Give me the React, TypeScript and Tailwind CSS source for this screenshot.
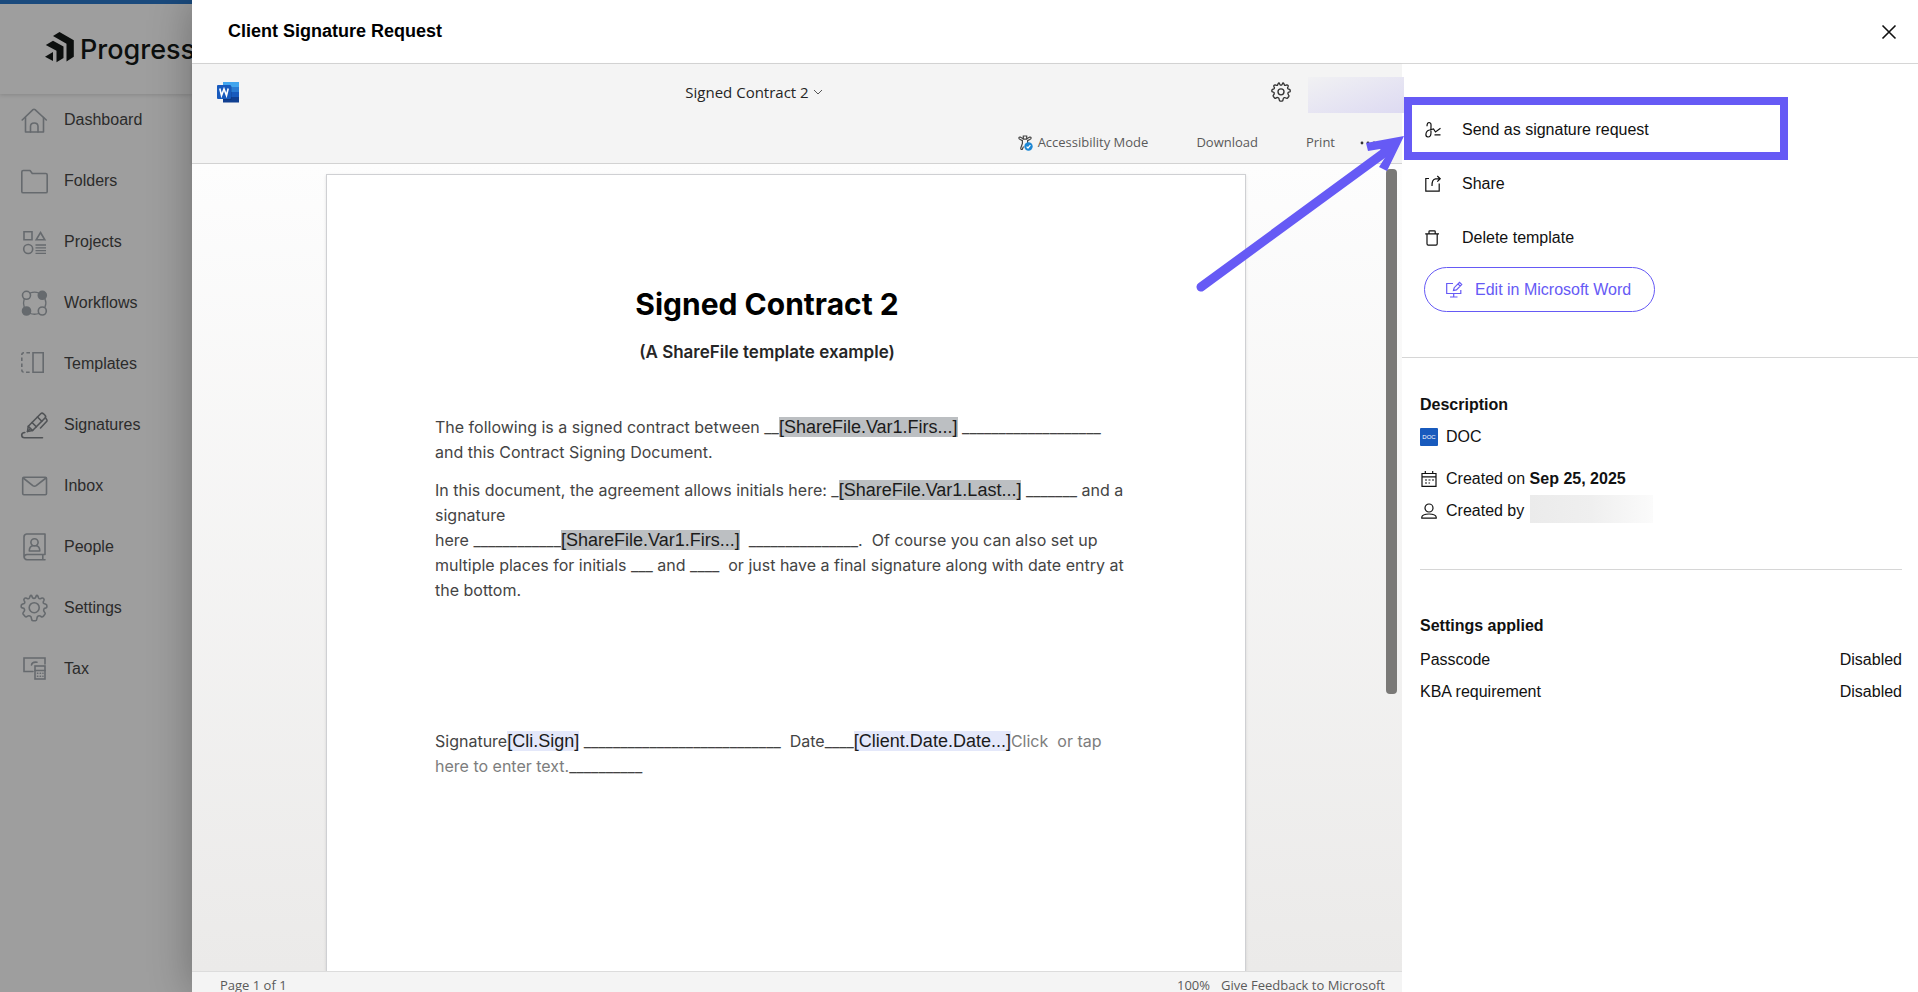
import type { ReactNode } from 'react'

type IconProps = { children: ReactNode }

function NavIcon({ children }: IconProps) {
  return (
    <svg
      viewBox="0 0 28 28"
      className="w-7 h-7 shrink-0 text-[#666a6e]"
      fill="none"
      stroke="currentColor"
      strokeWidth="1.6"
      strokeLinejoin="round"
      strokeLinecap="round"
    >
      {children}
    </svg>
  )
}

function ActionIcon({ children }: IconProps) {
  return (
    <svg viewBox="0 0 18 18" className="w-[18px] h-[18px] shrink-0" fill="none" stroke="currentColor" strokeWidth="1.2">
      {children}
    </svg>
  )
}

const GEAR =
  'M11.6 1.5 Q10.6 1.2 10.1 2.2 L9.3 4.1 Q8.8 5 7.8 4.7 L5.9 4 Q5 3.8 4.4 4.6 Q3.6 5.2 4 6.2 L4.8 8 Q5 9 4.1 9.5 L2.2 10.2 Q1.1 10.8 1.2 11.8 L1.2 13 Q1.4 13.8 2.3 13.9 Q4.5 14.3 4.5 15.5 Q5 16.8 3.3 18.5 Q2.6 19.3 3.2 20.2 L5 22.3 Q6 23.2 7 22.5 Q8.6 21.2 10 22 Q11.5 22.6 11.5 24.8 Q11.7 26.6 13 26.7 L15.5 26.7 Q16.7 26.6 16.8 25 Q17 22.7 18.2 22 Q19.5 21.4 21 22.5 Q22.2 23.4 23.2 22.4 L24.9 20.3 Q25.6 19.3 24.7 18.4 Q23.2 16.8 23.7 15.5 Q24 14.2 26 13.9 Q26.9 13.7 26.9 12.8 L26.8 11.5 Q26.8 10.6 25.8 10.2 L23.9 9.5 Q23 9 23.2 8 L24 6.2 Q24.4 5.2 23.6 4.6 Q23 3.8 22.1 4 L20.2 4.7 Q19.2 5 18.7 4.1 L17.9 2.2 Q17.4 1.2 16.4 1.5 Q15.6 4.5 14 4.5 Q12.4 4.5 11.6 1.5 Z'

const NAV = [
  {
    label: 'Dashboard',
    icon: (
      <>
        <path d="M2.2 14 L13 3.6 Q14 2.8 15 3.6 L26.3 14" />
        <path d="M5.5 11.5 V26 H23.5 V11.5" />
        <path d="M10.5 26 V20.5 Q10.5 17 14.2 17 Q18 17 18 20.5 V26" />
      </>
    )
  },
  {
    label: 'Folders',
    icon: <path d="M1.8 5 Q1.8 3.5 3.3 3.5 H10 L12.3 6.5 H25.7 Q27.2 6.5 27.2 8 V24.4 Q27.2 25.8 25.7 25.8 H3.3 Q1.8 25.8 1.8 24.4 Z" />
  },
  {
    label: 'Projects',
    icon: (
      <>
        <path d="M4 3.8 H12 V11.8 H4 Z" strokeLinejoin="miter" />
        <path d="M20.5 4.5 L24.8 11.8 H16.2 Z" strokeLinejoin="miter" />
        <circle cx="8.2" cy="21" r="4.5" />
        <path d="M15.5 17 H26 M15.5 19.8 H26 M15.5 22.6 H26 M15.5 25.4 H26" strokeLinecap="butt" strokeWidth="1.3" />
      </>
    )
  },
  {
    label: 'Workflows',
    icon: (
      <>
        <circle cx="6.5" cy="6.3" r="4" />
        <circle cx="22.3" cy="6.3" r="4" fill="currentColor" />
        <circle cx="6.5" cy="22" r="4" fill="currentColor" />
        <circle cx="22.3" cy="22" r="4" />
        <path d="M10 4 Q14.5 2.2 19 4 M4.2 10 Q2.8 14 4.2 18 M25 10 Q26.8 14 25 18 M10 24.5 Q14.5 26 19 24.5" strokeWidth="1.3" />
      </>
    )
  },
  {
    label: 'Templates',
    icon: (
      <>
        <path d="M10 2.8 H4 Q1.8 2.8 1.8 5 V20 Q1.8 22.2 4 22.2 H10" strokeDasharray="3.6 2.4" strokeLinecap="butt" />
        <path d="M13 2.8 H23.2 V22.2 H13 Z" strokeLinejoin="miter" />
      </>
    )
  },
  {
    label: 'Signatures',
    icon: (
      <g className="text-[#505356]">
        <path d="M7.5 20.5 L8.3 15.2 L20.7 2.8 Q22 1.5 23.5 2.8 L25 4.3 Q26.3 5.8 25 7 L12.6 19.5 Z" stroke="currentColor" />
        <path d="M8.3 15.2 L12.6 19.5 M12 11.5 L16.3 15.8 M17.5 6 L21.8 10.3 M20.5 17 L26.8 10.3 Q27.5 9.3 26 7.5 M7.5 20.5 L10 18" stroke="currentColor" />
        <path d="M22.5 26.7 H4.5 Q1.7 26.7 1.7 24 Q1.7 21.6 4.8 21.5" stroke="currentColor" />
      </g>
    )
  },
  {
    label: 'Inbox',
    icon: (
      <>
        <rect x="2.7" y="5.3" width="23.8" height="17.5" rx="1.2" />
        <path d="M3.2 6 L12.8 13.6 Q14.5 14.8 16.2 13.6 L26 6" />
      </>
    )
  },
  {
    label: 'People',
    icon: (
      <>
        <path d="M25 1 H6.5 Q4 1.3 4 4 V23.5 Q4.2 26.5 7 26.8 H25 M25 1 V21.5 H7 Q4.3 21.7 4.2 24 M22.8 21.5 V26.8" />
        <circle cx="14.5" cy="9.3" r="3.6" />
        <path d="M9.3 18 Q9.3 13.7 12.5 12.8 M16.5 12.8 Q19.8 13.7 19.8 18 H9.3" />
      </>
    )
  },
  {
    label: 'Settings',
    icon: (
      <>
        <path d={GEAR} />
        <circle cx="14.2" cy="13.7" r="5" />
      </>
    )
  },
  {
    label: 'Tax',
    icon: (
      <>
        <path d="M13 16.5 H4 V3 H25 V9" strokeLinejoin="miter" />
        <path d="M11.5 10 Q12 6.5 17 7.2" />
        <rect x="15" y="11" width="10" height="13" strokeLinejoin="miter" />
        <path d="M15 15.5 H25" />
        <path d="M17.5 18.3 H23 M17.5 21.3 H23" strokeDasharray="0.3 2.4" />
      </>
    )
  }
]

const ACTIONS = [
  {
    label: 'Send as signature request',
    icon: (
      <path d="M3 5.2 Q3 1.5 5.2 1.5 Q7.4 1.7 7 5.5 Q6.8 8.5 7 11.5 Q7 16 4 16 Q1.8 15.8 1.9 13.2 Q2.3 9.6 5.5 9 L9.5 8 L11.5 11 L16.5 7.3 M10.5 13.8 H16.5" />
    )
  },
  {
    label: 'Share',
    icon: <path d="M5 3.5 H1.8 V16.2 H15.2 V8.5 M8 11 Q7.8 4.2 11.5 3.8 H16 M13.3 1 L16.2 3.8 L13.3 6.6" />
  },
  {
    label: 'Delete template',
    icon: <path d="M1.2 4.8 H15 M5 4.5 V2.4 Q5 1.8 5.8 1.8 H10.4 Q11.2 1.8 11.2 2.4 V4.5 M3 5 V14.8 Q3 16.2 4.2 16.2 H12 Q13.2 16.2 13.2 14.8 V5" />
  }
]

const SETTINGS = [
  { name: 'Passcode', value: 'Disabled' },
  { name: 'KBA requirement', value: 'Disabled' }
]

function Sidebar() {
  return (
    <aside className="w-48 shrink-0 overflow-hidden bg-[#9e9e9e] border-t-4 border-[#1a4a7d]">
      <div className="h-[90px] pl-[45px] pt-[2px] flex items-center gap-1.5 shadow-[0_1px_4px_rgba(0,0,0,0.15)]">
        <svg viewBox="0 0 29 31" className="w-[29px] h-[31px] shrink-0 mb-[6px]" fill="#0c0f0e">
          <path d="M8 4 L14.5 0 L28.8 8.3 V24.8 L21.5 29.5 V11.8 Z" />
          <path d="M0.8 13 L8 8.8 L18.5 14.5 V26 L11.5 30.3 V18.7 Z" />
          <path d="M0 24.8 L8 20 V29 Z" />
        </svg>
        <span className="font-[Inter] font-medium text-[27px] leading-8 text-[#0c0f0e]">Progress</span>
      </div>
      <nav>
        <ul className="-mt-[5px]">
          {NAV.map((item) => (
            <li key={item.label}>
              <a href="#" className="flex items-center gap-4 h-[61px] pl-5 text-base text-[#2b2b2b]">
                <NavIcon>{item.icon}</NavIcon>
                {item.label}
              </a>
            </li>
          ))}
        </ul>
      </nav>
    </aside>
  )
}

function WordToolbar() {
  return (
    <div className="relative h-[100px] shrink-0 bg-[#f4f4f4] border-b border-[#d2d2d2] shadow-sm font-['Open_Sans',sans-serif] text-[#5a5a5a]">
      <div className="grid grid-cols-[1fr_auto_1fr] items-center h-14 pl-[25px] pr-[111px]">
        <svg viewBox="0 0 22 21" className="w-[22px] h-[21px]">
          <path d="M6 0 H22 V5 H6 Z" fill="#41a5ee" />
          <path d="M6 5 H22 V10 H6 Z" fill="#2b7cd3" />
          <path d="M6 10 H22 V15 H6 Z" fill="#185abd" />
          <path d="M6 15 H22 V20.5 H6 Z" fill="#103f91" />
          <path d="M6 4 H14.5 V18 H6 Z" fill="#0b2d66" fillOpacity=".4" />
          <rect x="0" y="3" width="14" height="14" rx="1" fill="#185abd" />
          <path d="M2.8 6.5 L4.5 13.5 L7 7 L9.5 13.5 L11.2 6.5" fill="none" stroke="#fff" strokeWidth="1.6" />
        </svg>
        <button className="flex items-center gap-1 text-[15px] text-[#252525]">
          Signed Contract 2
          <svg viewBox="0 0 10 10" className="w-[10px] h-[10px]" fill="none" stroke="#555" strokeWidth="1">
            <path d="M1 3 L5 7 L9 3" />
          </svg>
        </button>
        <button aria-label="Settings" className="justify-self-end">
          <svg viewBox="0 0 28 28" className="w-5 h-5" fill="none" stroke="#333" strokeWidth="1.9">
            <path d={GEAR} />
            <circle cx="14" cy="13.8" r="4.2" />
          </svg>
        </button>
      </div>
      <div className="flex justify-end items-center h-[45px] pr-[25px] text-[13px]">
        <button className="flex items-center gap-[5px] mr-12">
          <svg viewBox="0 0 15 16" className="w-[15px] h-4" fill="none" stroke="#444" strokeWidth="1.2">
            <path d="M5.3 1 H8.7 V4.2 H5.3 Z" />
            <path d="M5.3 3.8 L2.6 2.2 Q0.8 1.8 0.9 3.2 Q1 4 2.2 4.5 L4.4 5.6 V8.5 L2.8 13 Q2.6 14.8 4.2 14.4 L5.5 11.5 M8.7 3.8 L11.4 2.2 Q13.2 1.8 13.1 3.2 Q13 4 11.8 4.5 L9.6 5.6 V8" />
            <circle cx="10.5" cy="11.5" r="4.2" fill="#1d87d4" stroke="none" />
            <path d="M8.6 11.6 L10 13 L12.4 10.2" stroke="#fff" />
          </svg>
          Accessibility Mode
        </button>
        <button className="mr-12">Download</button>
        <button className="mr-6">Print</button>
        <button aria-label="More options">
          <svg viewBox="0 0 18 4" className="w-[18px] h-1" fill="#333">
            <circle cx="3" cy="2" r="1.4" />
            <circle cx="9" cy="2" r="1.4" />
            <circle cx="15" cy="2" r="1.4" />
          </svg>
        </button>
      </div>
      {/* redacted account name */}
      <div className="absolute z-10 right-[-2px] top-[13px] w-24 h-9 bg-linear-to-br from-[#f1f1f3] to-[#dddaf2]" />
    </div>
  )
}

function Field({ children, tone = 'gray' }: { children: ReactNode; tone?: 'gray' | 'blue' }) {
  return (
    <span
      className={`font-['Liberation_Sans',sans-serif] text-[18px] text-[#1b1b1b] ${tone === 'gray' ? 'bg-[#bcbfc2]' : 'bg-[#e4e8fa]'}`}
    >
      {children}
    </span>
  )
}

function Line({ children }: { children: ReactNode }) {
  return <span className="block h-[25px] leading-[25px] whitespace-pre">{children}</span>
}

function DocumentPage() {
  return (
    <article className="w-[920px] border border-b-0 border-[#cfd0d3] bg-white pt-[104px] pl-[108px] font-[Inter] text-base text-[#444] shadow-sm overflow-hidden">
      <header className="w-[664px] text-center">
        <h1 className="text-[30px] leading-[50px] font-bold text-black">Signed Contract 2</h1>
        <h2 className="text-[17px] leading-[46px] font-semibold text-[#262626]">(A ShareFile template example)</h2>
      </header>
      <p className="mt-10">
        <Line>The following is a signed contract between __<Field>[ShareFile.Var1.Firs...]</Field> ___________________</Line>
        <Line>and this Contract Signing Document.</Line>
      </p>
      <p className="mt-[13px]">
        <Line>In this document, the agreement allows initials here: _<Field>[ShareFile.Var1.Last...]</Field> _______ and a</Line>
        <Line>signature</Line>
        <Line>here ____________<Field>[ShareFile.Var1.Firs...]</Field>  _______________.  Of course you can also set up</Line>
        <Line>multiple places for initials ___ and ____  or just have a final signature along with date entry at</Line>
        <Line>the bottom.</Line>
      </p>
      <p className="mt-[126px]">
        <Line>
          Signature<Field tone="blue">[Cli.Sign]</Field> ___________________________  Date____<Field tone="blue">[Client.Date.Date...]</Field>
          <span className="text-[#7d7d7d]">Click  or tap</span>
        </Line>
        <Line>
          <span className="text-[#7d7d7d]">here to enter text.</span>__________
        </Line>
      </p>
    </article>
  )
}

function Preview() {
  return (
    <section className="flex-1 min-w-0 flex flex-col">
      <WordToolbar />
      <div className="relative flex-1 min-h-0 flex justify-center pt-[10px] pr-[22px] overflow-hidden bg-linear-to-b from-[#fdfdfd] to-[#ebeae9]">
        <DocumentPage />
        <div className="absolute right-[5px] top-[5px] w-[11px] h-[525px] rounded-[4px] bg-[#7a7977]" />
      </div>
      <footer className="h-[21px] shrink-0 flex justify-between pl-7 pr-[17px] pt-1 overflow-hidden whitespace-nowrap bg-[#f4f4f4] border-t border-[#dcdcdc] font-['Open_Sans',sans-serif] text-[13px] leading-[18px] text-[#5a5a5a]">
        <span>Page 1 of 1</span>
        <span className="flex gap-[11px]">
          <span>100%</span>
          <a href="#">Give Feedback to Microsoft</a>
        </span>
      </footer>
    </section>
  )
}

function Callout() {
  return (
    <div className="pointer-events-none">
      <div className="absolute left-[2px] top-[33px] w-[384px] h-[63px] border-8 border-[#665af5]" />
      <svg viewBox="0 0 214 170" className="absolute left-[-212px] top-[66px] w-[214px] h-[170px]">
        <path d="M11 157 L198 20" stroke="#665af5" strokeWidth="9" strokeLinecap="round" />
        <path d="M214 6 L176 13 L178 21 L190 19 L196 26 L189 37 L197 41 Z" fill="#665af5" />
      </svg>
    </div>
  )
}

function DetailsPanel() {
  return (
    <section className="relative w-[516px] shrink-0 bg-white text-base text-[#111]">
      <Callout />
      <div className="h-[294px] pt-[39px] pl-[22px] border-b border-[#d6d6d6]">
        {ACTIONS.map((action) => (
          <button key={action.label} className="flex items-center gap-5 h-[54px]">
            <ActionIcon>{action.icon}</ActionIcon>
            {action.label}
          </button>
        ))}
        <button className="flex items-center gap-3 h-[45px] mt-[2px] px-5 w-[231px] rounded-full border border-[#665af5] text-[#665af5] whitespace-nowrap">
          <ActionIcon>
            <path d="M8 2.5 H1.7 V12.5 H15.8 V9 M8.7 12.5 V16 M5 16 H12.5" />
            <path d="M8.5 9.5 L9.2 6.7 L14.5 1.4 L16.7 3.6 L11.4 8.9 Z M13 2.9 L15.2 5.1" />
          </ActionIcon>
          Edit in Microsoft Word
        </button>
      </div>
      <div className="ml-[18px] mr-4">
        <div className="h-[212px] pt-[31px] border-b border-[#d6d6d6]">
          <h3 className="font-bold leading-8">Description</h3>
          <div className="flex items-center gap-2 h-8">
            <svg viewBox="0 0 18 18" className="w-[18px] h-[18px]">
              <rect width="18" height="18" rx="1" fill="#185abd" />
              <text x="9" y="11" textAnchor="middle" fontSize="6" fill="#fff">DOC</text>
            </svg>
            DOC
          </div>
          <div className="flex items-center gap-2 h-8 mt-[10px]">
            <ActionIcon>
              <path d="M2 3.5 H16 V16.3 H2 Z M2 6.8 H16 M5.3 1 V3.5 M12.7 1 V3.5" />
              <path d="M5 10 H14 M5 13 H10" strokeDasharray="2 1.5" />
            </ActionIcon>
            <span>Created on <b>Sep 25, 2025</b></span>
          </div>
          <div className="flex items-center gap-2 h-8">
            <ActionIcon>
              <circle cx="9" cy="6" r="4" />
              <path d="M1.8 16.2 V15 Q2.3 12 9 12 Q15.7 12 16.2 15 V16.2 Z" />
            </ActionIcon>
            <span className="flex items-center gap-1.5">
              Created by
              <span className="w-[123px] h-7 mb-1 bg-linear-to-r from-[#ebebeb] via-[#efefef] to-[#fbfbfb]" />
            </span>
          </div>
        </div>
        <h3 className="mt-10 font-bold leading-8">Settings applied</h3>
        <dl className="mt-0.5">
          {SETTINGS.map((row) => (
            <div key={row.name} className="flex justify-between leading-8">
              <dt>{row.name}</dt>
              <dd>{row.value}</dd>
            </div>
          ))}
        </dl>
      </div>
    </section>
  )
}

export default function App() {
  return (
    <div className="flex h-screen overflow-hidden font-['Liberation_Sans',Arial,sans-serif]">
      <Sidebar />
      <main className="relative flex-1 min-w-0 flex flex-col bg-white shadow-[0_0_40px_rgba(0,0,0,0.3)]">
        <header className="h-16 shrink-0 flex items-center justify-between pl-9 pr-[21px] border-b border-[#d6d6d6]">
          <h2 className="font-bold text-[18px] text-black">Client Signature Request</h2>
          <button aria-label="Close">
            <svg viewBox="0 0 16 16" className="w-4 h-4" fill="none" stroke="#111" strokeWidth="1.6">
              <path d="M1.5 1.5 L14.5 14.5 M14.5 1.5 L1.5 14.5" />
            </svg>
          </button>
        </header>
        <div className="flex flex-1 min-h-0">
          <Preview />
          <DetailsPanel />
        </div>
      </main>
    </div>
  )
}
